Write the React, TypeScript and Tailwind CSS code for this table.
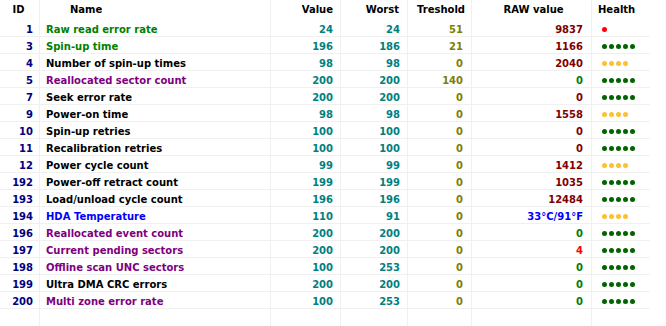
type Row = {
  id: number;
  name: string;
  nameColor: string;
  value: number;
  worst: number;
  thr: number;
  raw: string;
  rawColor: string;
  health: 'ok' | 'warn' | 'bad';
};

const GREEN = 'text-[#008000]';
const BLACK = 'text-black';
const PURPLE = 'text-[#800080]';
const BLUE = 'text-[#0000ff]';
const MAROON = 'text-[#800000]';
const RED = 'text-[#ff0000]';

const ROWS: Row[] = [
  { id: 1, name: 'Raw read error rate', nameColor: GREEN, value: 24, worst: 24, thr: 51, raw: '9837', rawColor: MAROON, health: 'bad' },
  { id: 3, name: 'Spin-up time', nameColor: GREEN, value: 196, worst: 186, thr: 21, raw: '1166', rawColor: MAROON, health: 'ok' },
  { id: 4, name: 'Number of spin-up times', nameColor: BLACK, value: 98, worst: 98, thr: 0, raw: '2040', rawColor: MAROON, health: 'warn' },
  { id: 5, name: 'Reallocated sector count', nameColor: PURPLE, value: 200, worst: 200, thr: 140, raw: '0', rawColor: GREEN, health: 'ok' },
  { id: 7, name: 'Seek error rate', nameColor: BLACK, value: 200, worst: 200, thr: 0, raw: '0', rawColor: MAROON, health: 'ok' },
  { id: 9, name: 'Power-on time', nameColor: BLACK, value: 98, worst: 98, thr: 0, raw: '1558', rawColor: MAROON, health: 'warn' },
  { id: 10, name: 'Spin-up retries', nameColor: BLACK, value: 100, worst: 100, thr: 0, raw: '0', rawColor: MAROON, health: 'ok' },
  { id: 11, name: 'Recalibration retries', nameColor: BLACK, value: 100, worst: 100, thr: 0, raw: '0', rawColor: MAROON, health: 'ok' },
  { id: 12, name: 'Power cycle count', nameColor: BLACK, value: 99, worst: 99, thr: 0, raw: '1412', rawColor: MAROON, health: 'warn' },
  { id: 192, name: 'Power-off retract count', nameColor: BLACK, value: 199, worst: 199, thr: 0, raw: '1035', rawColor: MAROON, health: 'ok' },
  { id: 193, name: 'Load/unload cycle count', nameColor: BLACK, value: 196, worst: 196, thr: 0, raw: '12484', rawColor: MAROON, health: 'ok' },
  { id: 194, name: 'HDA Temperature', nameColor: BLUE, value: 110, worst: 91, thr: 0, raw: '33°C/91°F', rawColor: BLUE, health: 'warn' },
  { id: 196, name: 'Reallocated event count', nameColor: PURPLE, value: 200, worst: 200, thr: 0, raw: '0', rawColor: GREEN, health: 'ok' },
  { id: 197, name: 'Current pending sectors', nameColor: PURPLE, value: 200, worst: 200, thr: 0, raw: '4', rawColor: RED, health: 'ok' },
  { id: 198, name: 'Offline scan UNC sectors', nameColor: PURPLE, value: 100, worst: 253, thr: 0, raw: '0', rawColor: GREEN, health: 'ok' },
  { id: 199, name: 'Ultra DMA CRC errors', nameColor: BLACK, value: 200, worst: 200, thr: 0, raw: '0', rawColor: GREEN, health: 'ok' },
  { id: 200, name: 'Multi zone error rate', nameColor: PURPLE, value: 100, worst: 253, thr: 0, raw: '0', rawColor: GREEN, health: 'ok' },
];

const Dots = ({ kind }: { kind: Row['health'] }) => {
  if (kind === 'bad') return <span className="block w-[5px] h-[5px] rounded-full bg-[#ff0000]" />;
  const n = kind === 'ok' ? 5 : 4;
  const color = kind === 'ok' ? 'bg-[#006400]' : 'bg-[#ffc030]';
  return (
    <div className="flex gap-[2px]">
      {[...Array(n)].map((_, i) => (
        <span key={i} className={`block w-[5px] h-[5px] rounded-full ${color}`} />
      ))}
    </div>
  );
};

const cell = 'h-full flex items-center border-r border-[#f0f0f0]';
const rcell = 'h-full flex items-center pt-[3px] border-r border-[#f0f0f0]';

export default function App() {
  return (
    <div
      className="w-[666px] h-[326px] bg-white overflow-hidden text-[10px] font-bold leading-none"
      style={{ fontFamily: '"DejaVu Sans", Verdana, sans-serif' }}
    >
      {/* header */}
      <div className="flex h-[20px] w-[650px] text-black">
        <div className={`${cell} w-[40px] justify-center pr-[2px]`}>ID</div>
        <div className={`${cell} w-[231px] pl-[30px]`}>Name</div>
        <div className={`${cell} w-[70px] justify-end pr-[7px]`}>Value</div>
        <div className={`${cell} w-[67px] justify-end pr-[8px]`}>Worst</div>
        <div className={`${cell} w-[64px] justify-end pr-[6px]`}>Treshold</div>
        <div className={`${cell} w-[120px] justify-center pl-[4px]`}>RAW value</div>
        <div className="h-full flex items-center w-[58px] pl-[6px]">Health</div>
      </div>

      {/* rows */}
      {ROWS.map((r) => (
        <div key={r.id} className="flex h-[17px] w-[650px] border-b border-[#f0f0f0]">
          <div className={`${rcell} w-[40px] justify-end pr-[6px] text-[#000080]`}>{r.id}</div>
          <div className={`${rcell} w-[231px] pl-[6px] ${r.nameColor}`}>{r.name}</div>
          <div className={`${rcell} w-[70px] justify-end pr-[7px] text-[#008080]`}>{r.value}</div>
          <div className={`${rcell} w-[67px] justify-end pr-[7px] text-[#008080]`}>{r.worst}</div>
          <div className={`${rcell} w-[64px] justify-end pr-[8px] text-[#808000]`}>{r.thr}</div>
          <div className={`${rcell} w-[120px] justify-end pr-[8px] ${r.rawColor}`}>{r.raw}</div>
          <div className="h-full flex items-center pt-[3px] w-[58px] pl-[10px]">
            <Dots kind={r.health} />
          </div>
        </div>
      ))}

      {/* empty filler row */}
      <div className="flex h-[17px] w-[650px]">
        <div className={`${cell} w-[40px]`} />
        <div className={`${cell} w-[231px]`} />
        <div className={`${cell} w-[70px]`} />
        <div className={`${cell} w-[67px]`} />
        <div className={`${cell} w-[64px]`} />
        <div className={`${cell} w-[120px]`} />
        <div className="h-full w-[58px]" />
      </div>
    </div>
  );
}
